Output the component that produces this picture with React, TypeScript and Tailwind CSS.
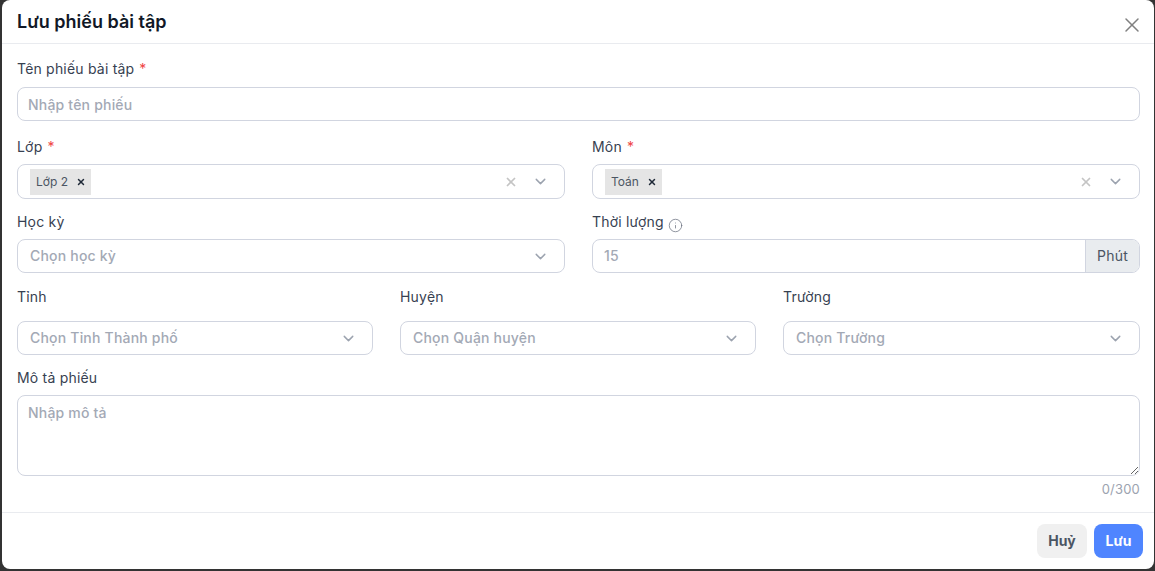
import { ChevronDown, Info, X } from "lucide-react";

function Label({ text, required, className = "" }: { text: string; required?: boolean; className?: string }) {
  return (
    <div className={`flex items-center text-sm leading-5 tracking-[0.2px] text-[#374151] ${className}`}>
      {text}
      {required && <span className="ml-[5px] text-[#ef4444]">*</span>}
    </div>
  );
}

function Select({ placeholder, tag, clearGap }: { placeholder?: string; tag?: string; clearGap?: boolean }) {
  return (
    <div className={`flex items-center rounded-lg border border-[#d1d5e0] pr-[15px] ${tag ? "h-[35px] pl-3" : "h-[34px] pl-3"}`}>
      {tag ? (
        <span className="flex h-[26px] items-center gap-2 bg-[#e5e5e5] pl-[6px] pr-[5px] text-xs text-[#4b5563]">
          {tag}
          <X size={10} strokeWidth={3.5} className="text-[#1f2937]" />
        </span>
      ) : (
        <span className="text-sm font-medium tracking-[0.2px] text-[#a3a9b5]">{placeholder}</span>
      )}
      <span className="flex-1" />
      {clearGap && <X size={14} strokeWidth={3} className="mr-[14px] text-[#c4c4c4]" />}
      <ChevronDown size={17} strokeWidth={2} className="text-[#9ca3af]" />
    </div>
  );
}

export default function App() {
  return (
    <div className="h-[571px] w-[1155px] overflow-hidden bg-[#333333] pl-[2px] pr-[1px] font-['Inter',sans-serif]">
      <div className="flex h-[569px] flex-col rounded-b-lg rounded-t-lg bg-white">
        {/* Header */}
        <div className="flex h-[44px] shrink-0 items-center justify-between border-b border-[#e9ebef] pl-[15px] pr-[10px]">
          <h1 className="text-lg font-semibold text-[#111827]">Lưu phiếu bài tập</h1>
          <X size={24} strokeWidth={1.5} className="mt-[6px] text-[#808080]" />
        </div>

        {/* Form */}
        <div className="flex-1 pl-[15px] pr-[14px]">
          <Label text="Tên phiếu bài tập" required className="mt-[15px] h-5" />
          <input
            placeholder="Nhập tên phiếu"
            className="mt-[8px] block h-[34px] w-full rounded-lg border border-[#d1d5e0] px-[10px] text-sm font-medium tracking-[0.2px] outline-none placeholder:text-[#a3a9b5]"
          />

          <div className="mt-[16px] grid grid-cols-2 gap-x-[27px]">
            <div>
              <Label text="Lớp" required className="h-5" />
              <div className="mt-[7px]">
                <Select tag="Lớp 2" clearGap />
              </div>
            </div>
            <div>
              <Label text="Môn" required className="h-5" />
              <div className="mt-[7px]">
                <Select tag="Toán" clearGap />
              </div>
            </div>
          </div>

          <div className="mt-[13px] grid grid-cols-2 gap-x-[27px]">
            <div>
              <Label text="Học kỳ" className="h-5" />
              <div className="mt-[7px]">
                <Select placeholder="Chọn học kỳ" />
              </div>
            </div>
            <div>
              <div className="flex h-5 items-center gap-[4px] text-sm tracking-[0.2px] text-[#374151]">
                Thời lượng
                <Info size={15} strokeWidth={1.2} className="mt-[6px] text-[#6b7280]" />
              </div>
              <div className="mt-[7px] flex h-[34px] overflow-hidden rounded-lg border border-[#d1d5e0]">
                <input
                  placeholder="15"
                  className="min-w-0 flex-1 px-[11px] text-sm font-medium tracking-[0.2px] outline-none placeholder:text-[#a3a9b5]"
                />
                <span className="flex w-[54px] items-center justify-center border-l border-[#d1d5e0] bg-[#e9ecef] text-sm tracking-[0.2px] text-[#4b5563]">
                  Phút
                </span>
              </div>
            </div>
          </div>

          <div className="mt-[14px] grid grid-cols-[356px_356px_1fr] gap-x-[27px]">
            <div>
              <Label text="Tỉnh" className="h-5" />
              <div className="mt-[14px]">
                <Select placeholder="Chọn Tỉnh Thành phố" />
              </div>
            </div>
            <div>
              <Label text="Huyện" className="h-5" />
              <div className="mt-[14px]">
                <Select placeholder="Chọn Quận huyện" />
              </div>
            </div>
            <div>
              <Label text="Trường" className="h-5" />
              <div className="mt-[14px]">
                <Select placeholder="Chọn Trường" />
              </div>
            </div>
          </div>

          <Label text="Mô tả phiếu" className="mt-[13px] h-5" />
          <textarea
            placeholder="Nhập mô tả"
            className="mt-[7px] block h-[81px] w-full rounded-lg border border-[#d1d5e0] px-[10px] py-[7px] text-sm font-medium tracking-[0.2px] outline-none placeholder:text-[#a3a9b5]"
          />
          <div className="mt-[3px] text-right text-[13px] leading-5 tracking-[0.2px] text-[#9ca3af]">0/300</div>
        </div>

        {/* Footer */}
        <div className="flex h-[57px] shrink-0 items-start justify-end gap-[7px] border-t border-[#e9ebef] pr-[11px] pt-[11px]">
          <button className="h-[34px] w-[50px] rounded-lg bg-[#f0f0f0] text-sm font-bold text-[#4b5563]">Huỷ</button>
          <button className="h-[34px] w-[49px] rounded-lg bg-[#4f85ff] text-sm font-bold text-white">Lưu</button>
        </div>
      </div>
    </div>
  );
}
